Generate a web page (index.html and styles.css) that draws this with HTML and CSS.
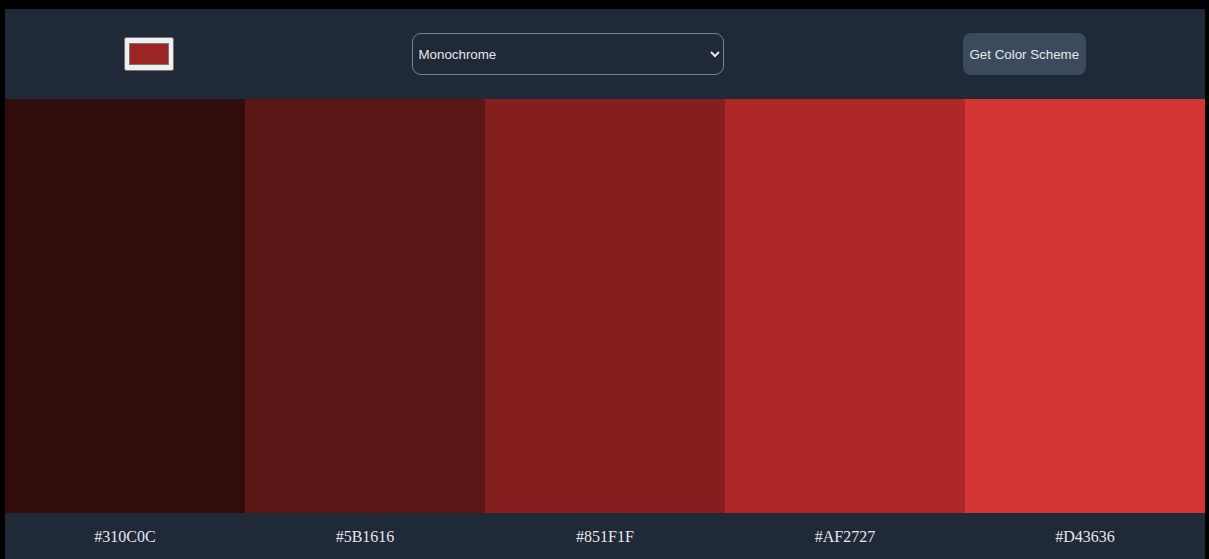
FILE: index.html
```html
<!DOCTYPE html>
<html lang="en">
<head>
<meta charset="utf-8">
<title>Color Scheme Generator</title>
<link rel="stylesheet" href="styles.css">
</head>
<body>
<div class="app">
  <header class="controls">
    <input class="seed" type="color" value="#9b2424">
    <select class="mode">
      <option>Monochrome</option>
      <option>Monochrome-dark</option>
      <option>Monochrome-light</option>
      <option>Analogic</option>
      <option>Complement</option>
      <option>Analogic-complement</option>
      <option>Triad</option>
    </select>
    <button class="get">Get Color Scheme</button>
  </header>
  <main class="swatches">
    <div class="swatch" style="background:#310C0C"></div>
    <div class="swatch" style="background:#5B1616"></div>
    <div class="swatch" style="background:#851F1F"></div>
    <div class="swatch" style="background:#AF2727"></div>
    <div class="swatch" style="background:#D43636"></div>
  </main>
  <footer class="codes">
    <p class="code">#310C0C</p>
    <p class="code">#5B1616</p>
    <p class="code">#851F1F</p>
    <p class="code">#AF2727</p>
    <p class="code">#D43636</p>
  </footer>
</div>
</body>
</html>
```

FILE: styles.css
```css
html, body {
  margin: 0;
  background: #000;
}
body {
  padding: 9px 4px 0 5px;
}
.app {
  width: 1200px;
}
.controls {
  height: 90px;
  background: #1f2937;
  display: flex;
  align-items: center;
  justify-content: space-around;
}
.seed {
  width: 50px;
  height: 34px;
  margin: 0;
}
.mode {
  width: 312px;
  height: 42px;
  margin: 0;
  padding: 0 1px;
  background: #1f2937;
  color: #e5e7eb;
  border: 1px solid #7b818b;
  border-radius: 9px;
  font-family: "Liberation Sans", Arial, sans-serif;
  font-size: 13.33px;
  color-scheme: dark;
}
.get {
  width: 123px;
  height: 42px;
  margin: 0;
  padding: 0;
  border: none;
  border-radius: 8px;
  background: #3c4a5e;
  color: #e5e7eb;
  font-family: "Liberation Sans", Arial, sans-serif;
  font-size: 13.33px;
}
.swatches {
  display: grid;
  grid-template-columns: repeat(5, 1fr);
  height: 414px;
}
.codes {
  display: grid;
  grid-template-columns: repeat(5, 1fr);
  background: #1f2937;
  padding: 15px 0 20px;
}
.code {
  margin: 0;
  text-align: center;
  color: #e5e7eb;
  font-family: "Liberation Serif", "Times New Roman", serif;
  font-size: 16px;
}
```
